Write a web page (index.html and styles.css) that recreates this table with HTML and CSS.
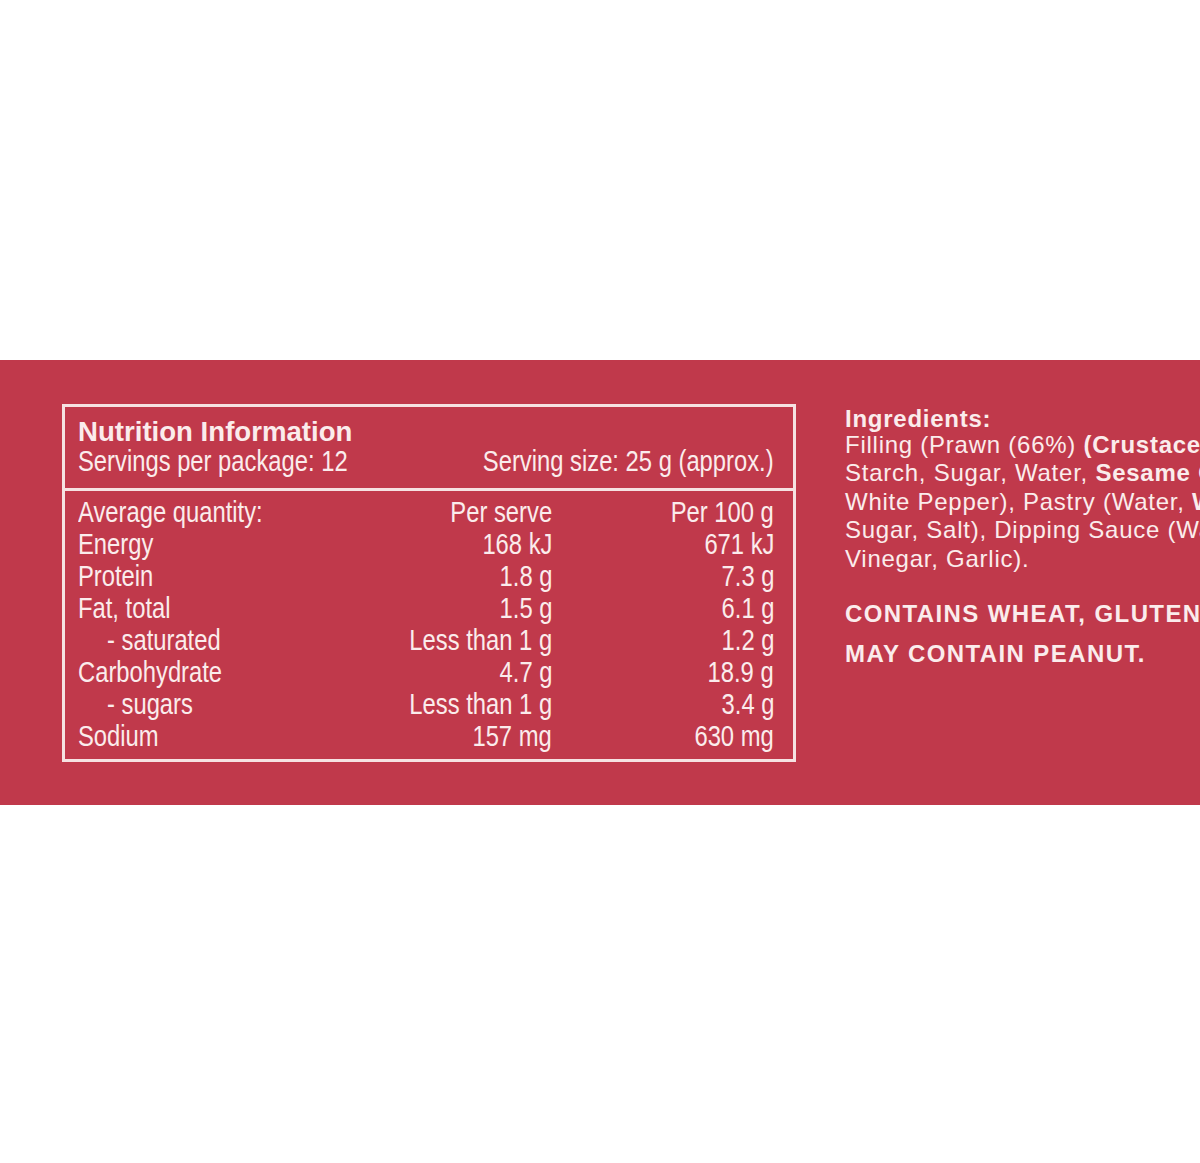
FILE: index.html
```html
<!DOCTYPE html>
<html lang="en">
<head>
<meta charset="utf-8">
<title>Nutrition Information</title>
<link rel="stylesheet" href="styles.css">
</head>
<body>
<div class="page">
  <div class="top-space"></div>
  <section class="band">
    <div class="panel">
      <div class="panel-head">
        <div class="title">Nutrition Information</div>
        <div class="serving-row">
          <span class="nl">Servings per package: 12</span>
          <span class="nr">Serving size: 25 g (approx.)</span>
        </div>
      </div>
      <div class="rule"></div>
      <div class="table">
        <div class="cell"><span class="nl">Average quantity:</span></div><div class="cell num"><span class="nr">Per serve</span></div><div class="cell num"><span class="nr">Per 100 g</span></div>
        <div class="cell"><span class="nl">Energy</span></div><div class="cell num"><span class="nr">168 kJ</span></div><div class="cell num"><span class="nr">671 kJ</span></div>
        <div class="cell"><span class="nl">Protein</span></div><div class="cell num"><span class="nr">1.8 g</span></div><div class="cell num"><span class="nr">7.3 g</span></div>
        <div class="cell"><span class="nl">Fat, total</span></div><div class="cell num"><span class="nr">1.5 g</span></div><div class="cell num"><span class="nr">6.1 g</span></div>
        <div class="cell sub"><span class="nl">- saturated</span></div><div class="cell num"><span class="nr">Less than 1 g</span></div><div class="cell num"><span class="nr">1.2 g</span></div>
        <div class="cell"><span class="nl">Carbohydrate</span></div><div class="cell num"><span class="nr">4.7 g</span></div><div class="cell num"><span class="nr">18.9 g</span></div>
        <div class="cell sub"><span class="nl">- sugars</span></div><div class="cell num"><span class="nr">Less than 1 g</span></div><div class="cell num"><span class="nr">3.4 g</span></div>
        <div class="cell"><span class="nl">Sodium</span></div><div class="cell num"><span class="nr">157 mg</span></div><div class="cell num"><span class="nr">630 mg</span></div>
      </div>
    </div>
    <div class="ingredients">
      <div class="ing-head">Ingredients:</div>
      <div class="ing-line">Filling (Prawn (66%) <b>(Crustacean)</b>, Pork, Vegetable Oil, Corn</div>
      <div class="ing-line">Starch, Sugar, Water, <b>Sesame</b> Oil, Salt, Soy Sauce, Seasoning,</div>
      <div class="ing-line">White Pepper), Pastry (Water, <b>Wheat</b> Flour, Tapioca Starch,</div>
      <div class="ing-line">Sugar, Salt), Dipping Sauce (Water, Soy Sauce, Sugar, Chilli,</div>
      <div class="ing-line">Vinegar, Garlic).</div>
      <div class="allergen first">CONTAINS WHEAT, GLUTEN, CRUSTACEAN, SESAME.</div>
      <div class="allergen">MAY CONTAIN PEANUT.</div>
    </div>
  </section>
</div>
</body>
</html>
```

FILE: styles.css
```css
html, body {
  margin: 0;
  padding: 0;
  background: #ffffff;
}

.page {
  width: 1200px;
  height: 1163px;
  overflow: hidden;
  background: #ffffff;
}

.top-space {
  height: 360px;
}

.band {
  height: 445px;
  box-sizing: border-box;
  background: #c0394b;
  padding: 44px 0 0 62px;
  display: flex;
  align-items: flex-start;
  gap: 49px;
  color: #fbecec;
  overflow: hidden;
}

.panel {
  flex: 0 0 auto;
  width: 734px;
  box-sizing: border-box;
  border: 3px solid #f6e2e2;
  padding: 11px 19px 7px 13px;
  font-family: "Liberation Sans", Arial, sans-serif;
}

.title {
  font-weight: bold;
  font-size: 27.6px;
  line-height: 28px;
}

.serving-row {
  display: flex;
  justify-content: space-between;
  font-size: 29px;
  line-height: 31px;
}

/* condensed lettering: squeeze horizontally */
.nl,
.nr {
  display: inline-block;
  white-space: nowrap;
  transform: scaleX(0.82);
}

.nl {
  transform-origin: left center;
}

.nr {
  transform-origin: right center;
}

.rule {
  height: 3px;
  background: #f6e2e2;
  margin: 11px -19px 5px -13px;
}

.table {
  display: grid;
  grid-template-columns: 1fr 230px 222px;
  font-size: 29px;
  line-height: 32px;
}

.cell {
  white-space: nowrap;
}

.num {
  text-align: right;
}

.sub {
  padding-left: 29px;
}

.ingredients {
  flex: 0 0 auto;
  margin-top: 3px;
  font-family: "Liberation Sans", Arial, sans-serif;
  font-size: 24px;
  letter-spacing: 0.75px;
  white-space: nowrap;
}

.ing-head {
  font-weight: bold;
  line-height: 24px;
}

.ing-line {
  line-height: 28.4px;
}

.allergen {
  font-weight: bold;
  line-height: 40px;
  letter-spacing: 1.4px;
}

.allergen.first {
  margin-top: 21px;
}
```
